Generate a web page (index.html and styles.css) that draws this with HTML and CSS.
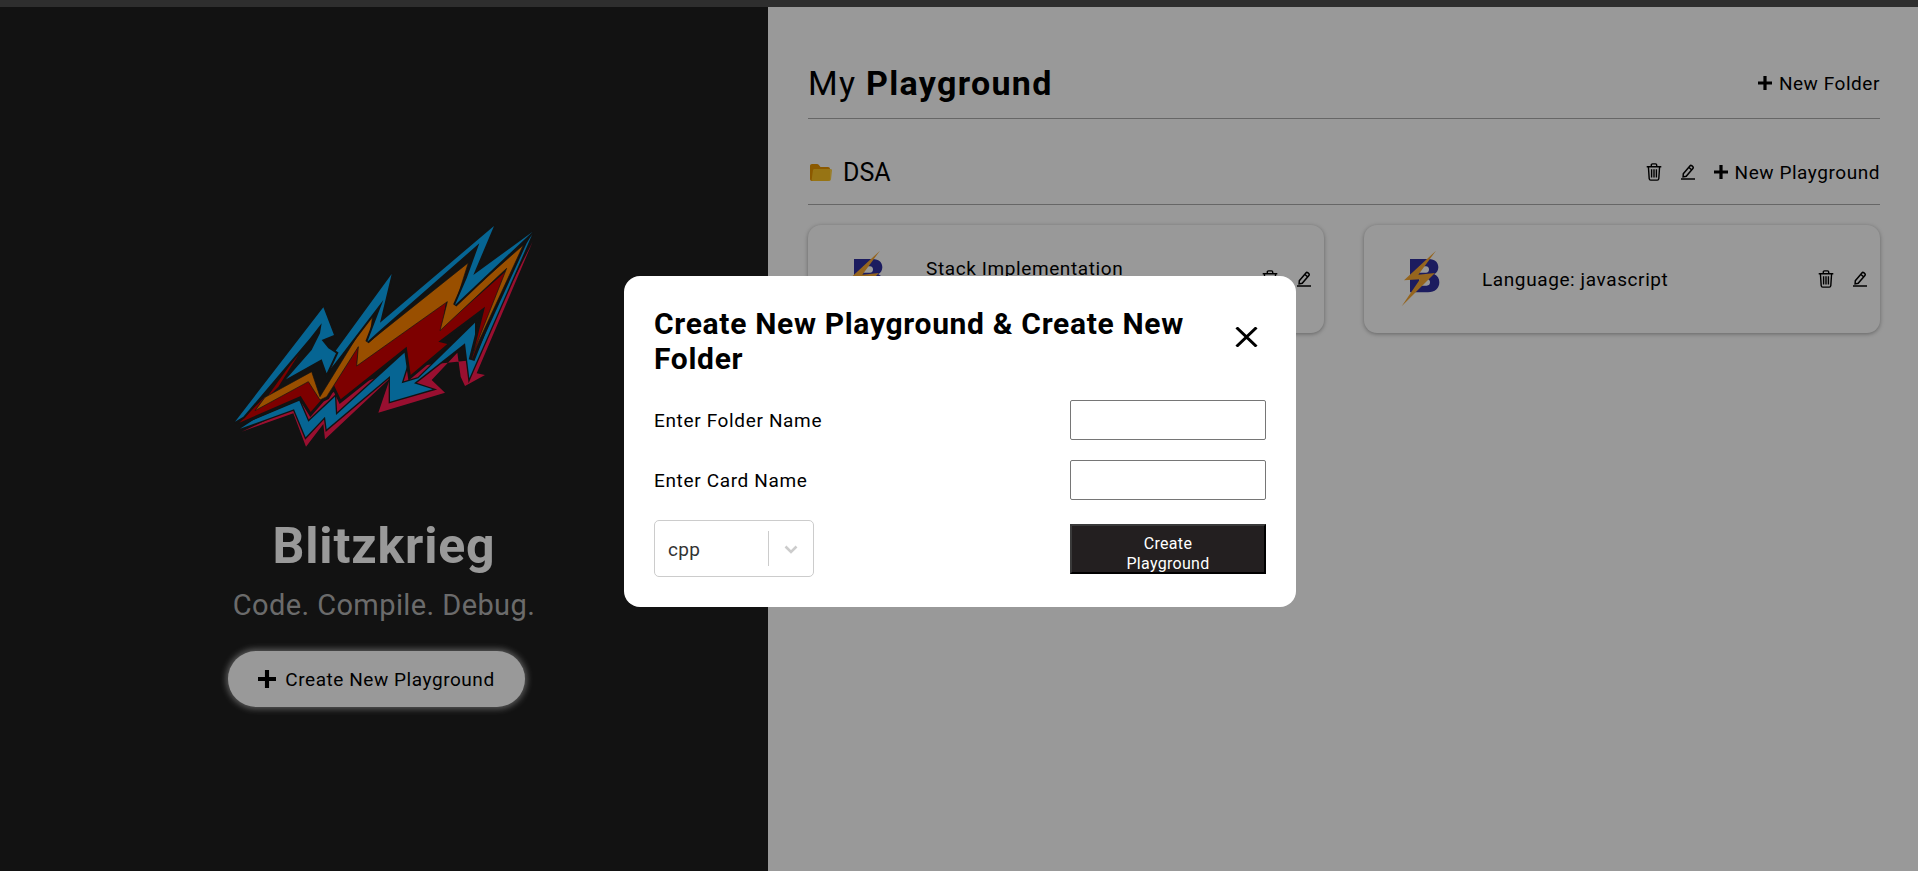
FILE: index.html
```html
<!DOCTYPE html>
<html lang="en">
<head>
<meta charset="utf-8">
<title>Blitzkrieg</title>
<link rel="stylesheet" href="styles.css">
</head>
<body>
<svg class="defs" width="0" height="0" aria-hidden="true">
  <symbol id="i-trash" viewBox="0 0 16 18">
    <path d="M.7 3.800h14.600M2.400 3.800l.8 11.800c.1.900.7 1.500 1.500 1.500h6.600c.8 0 1.400-.6 1.500-1.500l.8-11.800M5.300 3.800V2.100C5.300 1.400 5.800 .9 6.500 .9h3c.7 0 1.200.5 1.200 1.200v1.700M5.600 6.200v8.400M8 6.200v8.400M10.400 6.200v8.400" fill="none" stroke="currentColor" stroke-width="1.400"/>
  </symbol>
  <symbol id="i-pen" viewBox="0 0 14 16">
    <path d="M2.300 9.700 8.900 1.900c.5-.6 1.200-.7 1.800-.2l1.100.9c.6.5.6 1.200.1 1.800L5.200 12.300l-3.100.6zM7.700 3.300l2.800 2.400" fill="none" stroke="currentColor" stroke-width="1.500"/>
    <path d="M0 15h14" stroke="currentColor" stroke-width="1.500"/>
  </symbol>
  <symbol id="i-plus" viewBox="0 0 14 14">
    <path d="M7 0v14M0 7h14" stroke="currentColor" stroke-width="3.200"/>
  </symbol>
  <symbol id="i-mark" viewBox="0 0 120 180">
    <path fill-rule="evenodd" fill="#30309f" d="M30 33h55c22 0 30 12 30 25 0 10-5 17-12 21 9 4 15 12 15 24 0 18-13 30-34 30H30zM58 55v19h20c6 0 9-4 9-9.500S84 55 78 55zM58 93v20h22c7 0 10-4 10-10s-3-10-10-10z"/>
    <path fill="#f8a832" d="M108 8 12 97l48-3-55 81 100-100-50 5z"/>
  </symbol>
</svg>

<div class="topbar"></div>

<main class="app">
  <section class="intro">
    <svg class="flash" viewBox="12 0 1020 780" width="340" height="260" role="img" aria-label="Blitzkrieg logo">
      <polygon class="l-crimson" points="95,695 250,640 288,740 340,672 345,718 540,535 505,638 705,578 665,540 742,458 752,530 765,558 825,525 800,520 968,125 790,480 600,500 300,600"/>
      <polygon class="l-blue gap" points="90,686 252,628 287,712 345,650 350,688 540,528 540,605 668,568 612,550 765,430 778,535 968,100 950,130 795,470 795,368 625,535 575,550 612,432 378,645 375,590 295,665 268,602 130,660"/>
      <polygon class="l-red gap-wide" points="88,668 272,588 302,636 372,556 392,598 590,440 602,525 712,432 685,425 825,320 785,480 892,210 695,385 710,295 440,490 445,440 350,590 330,600 295,540 135,632 165,590"/>
      <polygon class="l-red" points="165,600 290,425 205,560"/>
      <polygon class="l-orange" points="135,632 165,592 305,515 330,590 490,330 478,425 775,188 735,315 940,135 785,470 890,205 690,392 712,305 440,498 445,440 350,590 330,600 295,545"/>
      <polygon class="l-blue gap-mid" points="350,520 375,455 545,222 510,368 852,78 790,225 968,95 735,315 770,235 808,130 505,395 472,425 520,300 375,490"/>
      <polygon class="l-blue gap-mid" points="75,665 340,322 372,405 335,420 355,445 378,460 350,520 335,478 228,538 305,450 330,400 335,370 300,415 100,650"/>
    </svg>
    <h1 class="brand">Blitzkrieg</h1>
    <p class="tagline">Code. Compile. Debug.</p>
    <button class="create-btn" type="button">
      <svg class="plus-big"><use href="#i-plus"/></svg>
      <span>Create New Playground</span>
    </button>
  </section>

  <section class="board">
    <header class="board-head">
      <h2 class="board-title">My <strong>Playground</strong></h2>
      <button class="link-btn" type="button"><svg class="plus"><use href="#i-plus"/></svg><span>New Folder</span></button>
    </header>

    <div class="folder-head">
      <div class="folder-name">
        <svg class="folder-icon" viewBox="0 0 22 17"><path fill="#e89400" d="M0 2C0 .8.800 0 2 0h5c.8 0 1.200.3 1.700.8L10.500 3H18c1.200 0 2 .8 2 2v10c0 1.200-.8 2-2 2H2c-1.200 0-2-.8-2-2z"/><path fill="#ffca28" opacity=".85" d="M4.500 5H20.500c1 0 1.600.7 1.500 1.600l-1 8.600c-.1 1-.9 1.800-2 1.800H3c-1 0-1.400-.6-1.300-1.400l1.200-9C3 5.700 3.600 5 4.500 5z"/></svg>
        <span class="dsa">DSA</span>
      </div>
      <div class="folder-actions">
        <svg class="trash"><use href="#i-trash"/></svg>
        <svg class="pen"><use href="#i-pen"/></svg>
        <button class="link-btn" type="button"><svg class="plus"><use href="#i-plus"/></svg><span>New Playground</span></button>
      </div>
    </div>

    <div class="cards">
      <article class="card">
        <svg class="mark"><use href="#i-mark"/></svg>
        <div class="card-text"><div>Stack Implementation</div><div>Language: cpp</div></div>
        <div class="card-actions"><svg class="trash"><use href="#i-trash"/></svg><svg class="pen"><use href="#i-pen"/></svg></div>
      </article>
      <article class="card">
        <svg class="mark"><use href="#i-mark"/></svg>
        <div class="card-text"><div>Language: javascript</div></div>
        <div class="card-actions"><svg class="trash"><use href="#i-trash"/></svg><svg class="pen"><use href="#i-pen"/></svg></div>
      </article>
    </div>
  </section>
</main>

<div class="overlay">
  <div class="modal">
    <div class="modal-head">
      <h3 class="modal-title">Create New Playground &amp; Create New Folder</h3>
      <svg class="close" viewBox="0 0 23 20"><path d="M1.500 0.500 21.500 19.500M21.500 0.500 1.500 19.500" stroke="currentColor" stroke-width="3" fill="none"/></svg>
    </div>
    <div class="form">
      <label class="field-label">Enter Folder Name</label>
      <input class="field" type="text">
      <label class="field-label">Enter Card Name</label>
      <input class="field" type="text">
      <div class="select">
        <span class="select-value">cpp</span>
        <span class="select-sep"></span>
        <svg class="select-arrow" viewBox="0 0 20 20"><path d="M4.500 7.500 10 13l5.500-5.500" fill="none" stroke="currentColor" stroke-width="2.600"/></svg>
      </div>
      <button class="submit" type="button">Create Playground</button>
    </div>
  </div>
</div>
</body>
</html>
```

FILE: styles.css
```css
* { box-sizing: border-box; }
html, body { margin: 0; height: 100%; }
body {
  display: flex;
  flex-direction: column;
  height: 871px;
  overflow: hidden;
  font-family: Roboto, "Liberation Sans", sans-serif;
  background: #fff;
  color: #000;
}
.defs { position: absolute; }
.topbar { height: 7px; background: #2e2e2e; flex: none; }
.app { flex: 1; display: flex; min-height: 0; }

.intro {
  width: 768px;
  flex: none;
  background: #1e1e1e;
  display: flex;
  flex-direction: column;
  align-items: center;
  padding-top: 193px;
}
.flash { display: block; flex: none; }
.l-crimson { fill: #ff1a50; }
.l-blue { fill: #0aa8f5; }
.l-red { fill: #d00000; }
.l-orange { fill: #ff8400; stroke: #1e1e1e; stroke-width: 2; }
.gap { stroke: #1e1e1e; stroke-width: 8; paint-order: stroke; }
.gap-mid { stroke: #1e1e1e; stroke-width: 12; paint-order: stroke; }
.gap-wide { stroke: #1e1e1e; stroke-width: 18; paint-order: stroke; }

.brand {
  margin: 56px 0 0;
  font-size: 50px;
  line-height: 60px;
  font-weight: 700;
  letter-spacing: .85px;
  color: #fff;
}
.tagline {
  margin: 11px 0 0;
  font-size: 29px;
  line-height: 36px;
  color: #b2b2b2;
  letter-spacing: .4px;
}
.create-btn {
  margin: 28px 15px 0 0;
  width: 297px;
  height: 56px;
  border: 0;
  border-radius: 28px;
  background: #fff;
  box-shadow: 0 0 6px 2px rgba(255, 255, 255, .55);
  display: flex;
  align-items: center;
  justify-content: center;
  gap: 9px;
  font: inherit;
  font-size: 19px;
  letter-spacing: .55px;
  color: #000;
  padding: 0;
}
.plus-big { width: 18px; height: 18px; }

.board {
  flex: 1;
  padding: 41px 38px 0 40px;
  min-width: 0;
}
.board-head {
  height: 71px;
  display: flex;
  align-items: center;
  justify-content: space-between;
  border-bottom: 1px solid #aaa;
}
.board-title { margin: 0; font-size: 34px; font-weight: 400; line-height: 40px; letter-spacing: 1.3px; }
.board-title strong { font-weight: 700; }
.link-btn {
  border: 0;
  background: none;
  padding: 0;
  font: inherit;
  font-size: 19px;
  letter-spacing: .55px;
  color: #000;
  display: flex;
  align-items: center;
  gap: 7px;
}
.plus { width: 14px; height: 14px; }
.folder-head {
  margin-top: 21px;
  height: 65px;
  display: flex;
  align-items: center;
  justify-content: space-between;
  border-bottom: 1px solid #aaa;
}
.folder-name { display: flex; align-items: center; gap: 11px; padding-left: 2px; }
.folder-icon { width: 22px; height: 17px; }
.dsa { font-size: 25px; }
.folder-actions { display: flex; align-items: center; gap: 19px; }
.trash { width: 16px; height: 18px; display: block; }
.pen { width: 14px; height: 16px; display: block; }

.cards {
  margin-top: 20px;
  display: grid;
  grid-template-columns: 1fr 1fr;
  gap: 40px;
}
.card {
  height: 108px;
  background: #fff;
  border-radius: 13px;
  box-shadow: 0 1px 4px rgba(0, 0, 0, .35);
  display: flex;
  align-items: center;
  padding-left: 36px;
  padding-right: 13px;
}
.mark { width: 40px; height: 60px; flex: none; margin-top: -3px; }
.card-text {
  margin-left: 42px;
  flex: 1;
  font-size: 19px;
  letter-spacing: .6px;
  line-height: 21px;
}
.card-actions { display: flex; align-items: center; gap: 19px; }

.overlay {
  position: fixed;
  inset: 7px 0 0 0;
  background: rgba(0, 0, 0, .4);
  display: flex;
  align-items: flex-start;
  justify-content: center;
  padding-top: 269px;
  padding-left: 2px;
}
.modal {
  width: 672px;
  height: 331px;
  background: #fff;
  border-radius: 16px;
  padding: 30px;
}
.modal-head {
  display: flex;
  align-items: flex-start;
  justify-content: space-between;
}
.modal-title {
  margin: 0;
  width: 545px;
  font-size: 30px;
  letter-spacing: .68px;
  line-height: 35px;
  font-weight: 700;
}
.close { width: 23px; height: 20px; margin: 21px 8px 0 0; flex: none; }
.form {
  margin-top: 24px;
  display: grid;
  grid-template-columns: 1fr 196px;
  row-gap: 20px;
  align-items: center;
}
.field-label { font-size: 19px; letter-spacing: .65px; padding-top: 1px; }
.field {
  height: 40px;
  width: 196px;
  border: 1px solid #767676;
  border-radius: 2px;
  background: #fff;
  padding: 0 6px;
}
.select {
  width: 160px;
  height: 57px;
  border: 1px solid #ccc;
  border-radius: 5px;
  display: flex;
  align-items: center;
  padding-left: 13px;
}
.select-value { width: 100px; font-size: 19px; letter-spacing: .3px; color: #333; padding-top: 1px; }
.select-sep { width: 1px; height: 35px; background: #ccc; }
.select-arrow { width: 20px; height: 20px; color: #ccc; margin-left: 12px; }
.submit {
  height: 50px;
  width: 196px;
  background: #231f20;
  color: #fff;
  border: 2px outset #3a3a3a;
  font: inherit;
  font-size: 16px;
  letter-spacing: .3px;
  line-height: 20px;
  padding: 8px 40px 0;
}
```
